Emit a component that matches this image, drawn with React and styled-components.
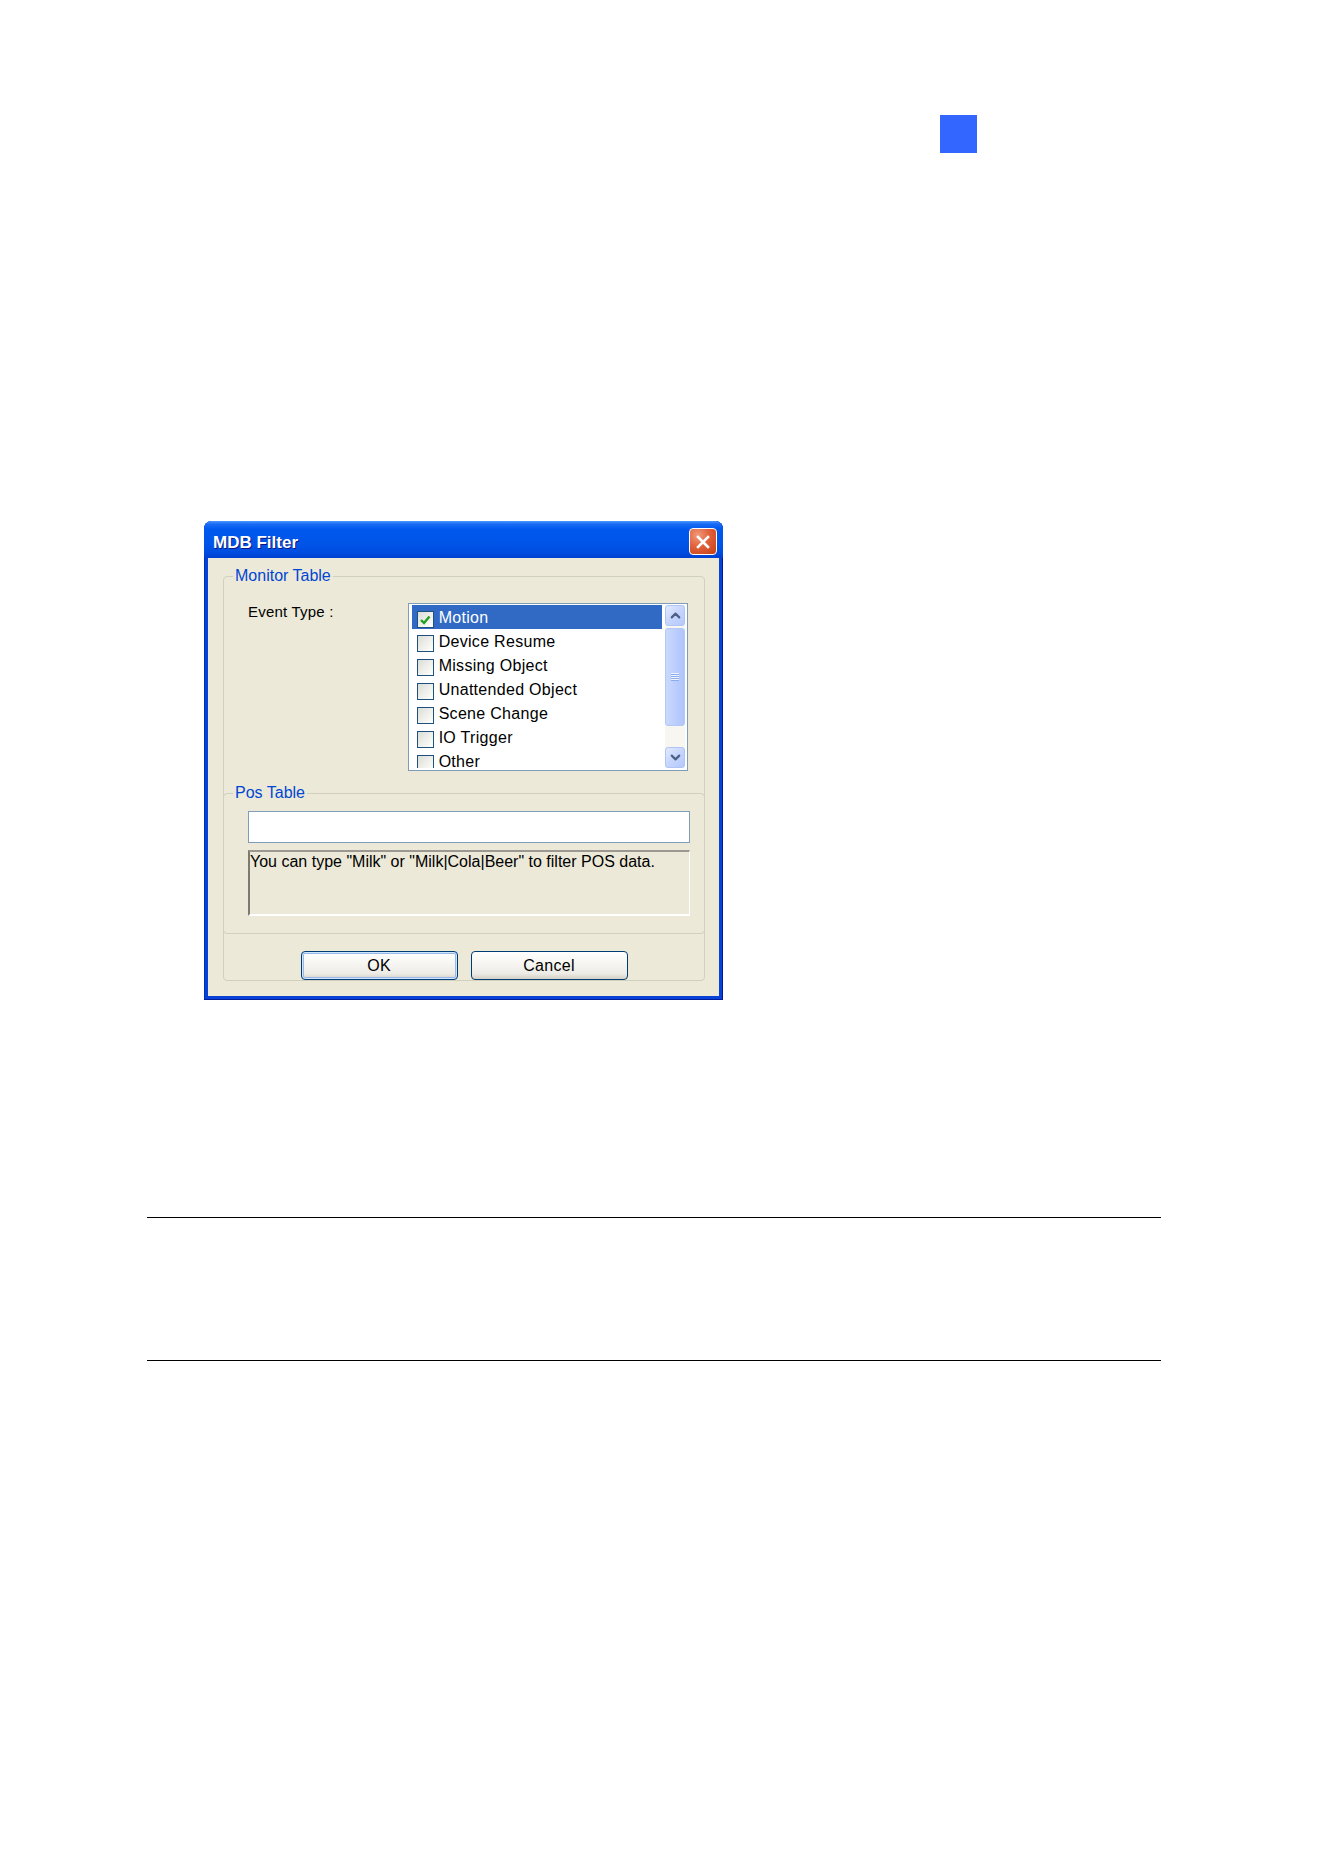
import React from 'react';
import styled, { createGlobalStyle } from 'styled-components';
import { ChevronUp, ChevronDown } from 'lucide-react';

const GlobalStyle = createGlobalStyle`
  html, body {
    margin: 0;
    padding: 0;
    background: #ffffff;
  }
  body {
    font-family: "Liberation Sans", Arial, sans-serif;
    color: #000;
  }
`;

const Page = styled.div`
  min-height: 1872px;
  padding-top: 115px;
  box-sizing: border-box;
  display: flex;
  flex-direction: column;
  align-items: flex-start;
`;

const ChapterTab = styled.div`
  width: 37px;
  height: 38px;
  margin-left: 940px;
  background: #3366ff;
`;

const Window = styled.div`
  width: 519px;
  margin: 368px 0 0 204px;
  padding: 0 4px 4px;
  box-sizing: border-box;
  border-radius: 8px 8px 0 0;
  background: #0841d6;
  box-shadow: inset 0 -1px 0 #001c9c, inset 1px 0 0 #0032b8, inset -1px 0 0 #00189a;
`;

const TitleBar = styled.div`
  height: 37px;
  margin: 0 -4px;
  padding: 0 6px 0 9px;
  display: flex;
  align-items: center;
  justify-content: space-between;
  border-radius: 8px 8px 0 0;
  background: linear-gradient(
    #4a98ff 0%,
    #1a6cf5 8%,
    #0058ee 22%,
    #0055e8 60%,
    #004ce0 85%,
    #003fd2 100%
  );
`;

const Title = styled.span`
  padding-top: 6px;
  font-size: 17px;
  font-weight: bold;
  color: #ffffff;
  text-shadow: 1px 1px 0 #0a1883;
`;

const CloseButton = styled.div`
  width: 28px;
  height: 27px;
  margin-top: 4px;
  box-sizing: border-box;
  border: 1px solid #ffffff;
  border-radius: 4px;
  background: radial-gradient(circle at 30% 25%, #f09a7c 0%, #e0603a 45%, #c63f14 100%);
  display: flex;
  align-items: center;
  justify-content: center;
`;

const Client = styled.div`
  background: #ece9d8;
  padding: 18px 14px 15px 15px;
`;

const GroupBox = styled.div`
  position: relative;
  border: 1px solid #d0d0bf;
  border-radius: 4px;
  margin: ${p => p.$margin || '0'};
  padding: ${p => p.$padding || '0'};
`;

const GroupLabel = styled.span`
  position: absolute;
  top: -10px;
  left: 9px;
  padding: 0 2px;
  background: #ece9d8;
  color: #0046d5;
  font-size: 16px;
  line-height: 18px;
`;

const EventRow = styled.div`
  display: flex;
  padding: 26px 16px 0 24px;
`;

const FieldLabel = styled.div`
  width: 160px;
  font-size: 15px;
  letter-spacing: 0.2px;
  line-height: 18px;
  color: #000;
`;

const ListBox = styled.div`
  width: 281px;
  height: 168px;
  box-sizing: border-box;
  border: 1px solid #7f9db9;
  background: #ffffff;
  display: flex;
  padding: 1px 2px 2px 3px;
`;

const Rows = styled.div`
  flex: 1;
  overflow: hidden;
  margin-right: 3px;
`;

const Row = styled.div`
  height: 24px;
  display: flex;
  align-items: flex-end;
  padding-left: 5px;
  gap: 5px;
  background: ${p => (p.$selected ? '#316ac5' : 'transparent')};
  color: ${p => (p.$selected ? '#ffffff' : '#000000')};
  font-size: 16px;
  letter-spacing: 0.3px;
  line-height: 22px;
`;

const CheckBox = styled.span`
  width: 17px;
  height: 17px;
  flex: none;
  box-sizing: border-box;
  margin-bottom: 1px;
  border: 1px solid #1c5180;
  background: linear-gradient(135deg, #dcdcd7 0%, #f2f2ee 60%, #ffffff 100%);
  display: flex;
  align-items: center;
  justify-content: center;
`;

const ScrollBar = styled.div`
  width: 20px;
  display: flex;
  flex-direction: column;
  background: #f7f6f1;
`;

const ScrollButton = styled.div`
  height: 21px;
  box-sizing: border-box;
  border: 1px solid #b0c4f5;
  border-radius: 3px;
  background: linear-gradient(135deg, #e2eafe 0%, #c6d5fd 50%, #b4c8fb 100%);
  display: flex;
  align-items: center;
  justify-content: center;
  color: #4d6185;
`;

const Thumb = styled.div`
  height: 98px;
  margin-top: 2px;
  box-sizing: border-box;
  border: 1px solid #b4c8f6;
  border-radius: 3px;
  background: linear-gradient(90deg, #cad9fd 0%, #bccefc 50%, #b0c5fb 100%);
  display: flex;
  align-items: center;
  justify-content: center;
`;

const Grip = styled.div`
  width: 8px;
  height: 8px;
  background: repeating-linear-gradient(#eef3fe 0 1px, #8cacf0 1px 2px);
`;

const Track = styled.div`
  flex: 1;
`;

const TextInput = styled.div`
  height: 32px;
  box-sizing: border-box;
  border: 1px solid #7f9db9;
  background: #ffffff;
`;

const HintBox = styled.div`
  height: 66px;
  margin-top: 7px;
  box-sizing: border-box;
  border-top: 2px solid #9a9890;
  border-left: 2px solid #7c7a72;
  border-right: 1px solid #ffffff;
  border-bottom: 2px solid #ffffff;
  padding: 1px 0;
  font-size: 16px;
  line-height: 18px;
  color: #000;
  background: #ece9d8;
`;

const ButtonRow = styled.div`
  display: flex;
  justify-content: center;
  gap: 13px;
  margin-top: 17px;
`;

const Button = styled.button`
  width: 157px;
  height: 29px;
  box-sizing: border-box;
  border: 1px solid #003c74;
  border-radius: 4px;
  background: linear-gradient(#ffffff 0%, #f6f5f1 45%, #ecebe6 80%, #d6d0c5 100%);
  box-shadow: ${p => (p.$default ? 'inset 0 0 0 1px #cee7ff, inset 0 0 0 2px #98b8ea' : 'none')};
  font-family: "Liberation Sans", Arial, sans-serif;
  font-size: 16px;
  letter-spacing: 0.3px;
  color: #000;
  padding: 0;
`;

const NoteBox = styled.div`
  width: 1014px;
  height: 144px;
  margin: 217px 0 0 147px;
  box-sizing: border-box;
  border-top: 1px solid #000;
  border-bottom: 1px solid #000;
`;

const events = [
  'Motion',
  'Device Resume',
  'Missing Object',
  'Unattended Object',
  'Scene Change',
  'IO Trigger',
  'Other',
];

const CheckMark = () => (
  <svg width="12" height="12" viewBox="0 0 12 12">
    <path d="M2 6 L5 9 L10.5 2.5" fill="none" stroke="#21a121" strokeWidth="2.4" />
  </svg>
);

const CloseX = () => (
  <svg width="16" height="16" viewBox="0 0 16 16">
    <path d="M3 3 L13 13 M13 3 L3 13" stroke="#ffffff" strokeWidth="2.6" strokeLinecap="square" />
  </svg>
);

export default function App() {
  return (
    <>
      <GlobalStyle />
      <Page>
        <ChapterTab />
        <Window>
          <TitleBar>
            <Title>MDB Filter</Title>
            <CloseButton>
              <CloseX />
            </CloseButton>
          </TitleBar>
          <Client>
            <GroupBox>
              <GroupLabel>Monitor Table</GroupLabel>
              <EventRow>
                <FieldLabel>Event Type :</FieldLabel>
                <ListBox>
                  <Rows>
                    {events.map((name, i) => (
                      <Row key={name} $selected={i === 0}>
                        <CheckBox>{i === 0 && <CheckMark />}</CheckBox>
                        {name}
                      </Row>
                    ))}
                  </Rows>
                  <ScrollBar>
                    <ScrollButton>
                      <ChevronUp size={15} strokeWidth={3.4} />
                    </ScrollButton>
                    <Thumb>
                      <Grip />
                    </Thumb>
                    <Track />
                    <ScrollButton>
                      <ChevronDown size={15} strokeWidth={3.4} />
                    </ScrollButton>
                  </ScrollBar>
                </ListBox>
              </EventRow>
              <GroupBox $margin="22px -1px 0" $padding="17px 14px 17px 24px">
                <GroupLabel>Pos Table</GroupLabel>
                <TextInput />
                <HintBox>You can type "Milk" or "Milk|Cola|Beer" to filter POS data.</HintBox>
              </GroupBox>
              <ButtonRow>
                <Button $default>OK</Button>
                <Button>Cancel</Button>
              </ButtonRow>
            </GroupBox>
          </Client>
        </Window>
        <NoteBox />
      </Page>
    </>
  );
}
